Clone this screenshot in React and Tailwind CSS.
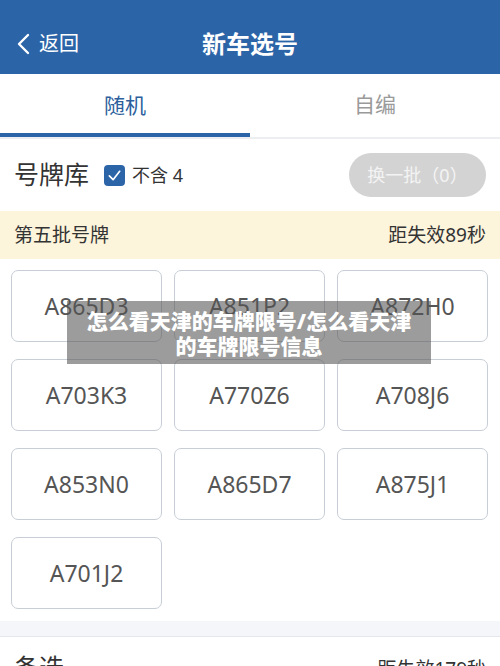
import React from "react";

const plates = [
  "A865D3", "A851P2", "A872H0",
  "A703K3", "A770Z6", "A708J6",
  "A853N0", "A865D7", "A875J1",
  "A701J2",
];

const font = { fontFamily: '"Noto Sans", "Noto Sans CJK SC", sans-serif' };

const App = () => (
  <div className="w-[500px] h-[666px] overflow-hidden bg-white relative" style={font}>
    {/* Header */}
    <div className="h-[74px] bg-[#2c64a8] flex items-center relative text-white pt-[14px]">
      <div className="flex items-center pl-[15px] gap-[8px]">
        <svg width="16" height="24" viewBox="0 0 16 24" fill="none">
          <path d="M13 3 L4 12 L13 21" stroke="white" strokeWidth="2.4" strokeLinecap="round" strokeLinejoin="round" />
        </svg>
        <span className="text-[20px]">返回</span>
      </div>
      <h1 className="absolute left-0 right-0 top-[14px] bottom-0 flex items-center justify-center text-[24px] font-bold pointer-events-none">新车选号</h1>
    </div>

    {/* Tabs */}
    <div className="flex h-[65px] border-b-2 border-[#eceef1]">
      <div className="w-1/2 flex items-center justify-center pt-[4px] text-[21px] text-[#2c5f9c] border-b-4 border-[#2c64a8]">随机</div>
      <div className="w-1/2 flex items-center justify-center pb-[2px] text-[21px] text-[#9a9a9a]">自编</div>
    </div>

    {/* Library row */}
    <div className="h-[72px] flex items-center px-[14px]">
      <span className="text-[25px] text-[#333]">号牌库</span>
      <span className="ml-[15px] w-[21px] h-[21px] rounded-[4px] bg-[#2c64a8] flex items-center justify-center">
        <svg width="15" height="15" viewBox="0 0 16 16" fill="none">
          <path d="M2.5 8.5 L6.5 12.5 L13.5 3.5" stroke="white" strokeWidth="1.8" strokeLinecap="round" strokeLinejoin="round" />
        </svg>
      </span>
      <span className="ml-[7px] text-[18px] text-[#333]">不含 4</span>
      <button className="ml-auto w-[137px] h-[44px] rounded-full bg-[#d3d3d3] text-[#f3f3f3] text-[18px]">换一批（0）</button>
    </div>

    {/* Batch bar */}
    <div className="h-[48px] bg-[#fdf4dc] flex items-center justify-between px-[14px] text-[19px] text-[#333]">
      <span>第五批号牌</span>
      <span>距失效89秒</span>
    </div>

    {/* Plates */}
    <div className="grid grid-cols-3 gap-x-[12px] gap-y-[17px] pl-[11px] pr-[12px] pt-[11px] pb-[12px]">
      {plates.map((p) => (
        <div key={p} className="h-[72px] rounded-[7px] border border-[#c8ced6] flex items-center justify-center text-[23px] text-[#555]">
          {p}
        </div>
      ))}
    </div>

    {/* Spacer */}
    <div className="h-[16px] bg-[#f4f6f9] border-b border-[#e3e6ea]"></div>

    {/* Alternates */}
    <div className="flex items-start justify-between px-[14px] pt-[12px]">
      <span className="text-[25px] text-[#333]">备选</span>
      <span className="text-[19px] text-[#333] pt-[6px]">距失效179秒</span>
    </div>

    {/* Overlay caption */}
    <div className="absolute left-[67px] top-[301px] w-[364px] h-[63px] bg-[rgba(85,85,85,0.58)] flex flex-col items-center justify-center pt-[2px] text-white font-black text-[21px] leading-[25px]">
      <span>怎么看天津的车牌限号/怎么看天津</span>
      <span>的车牌限号信息</span>
    </div>
  </div>
);

export default App;
